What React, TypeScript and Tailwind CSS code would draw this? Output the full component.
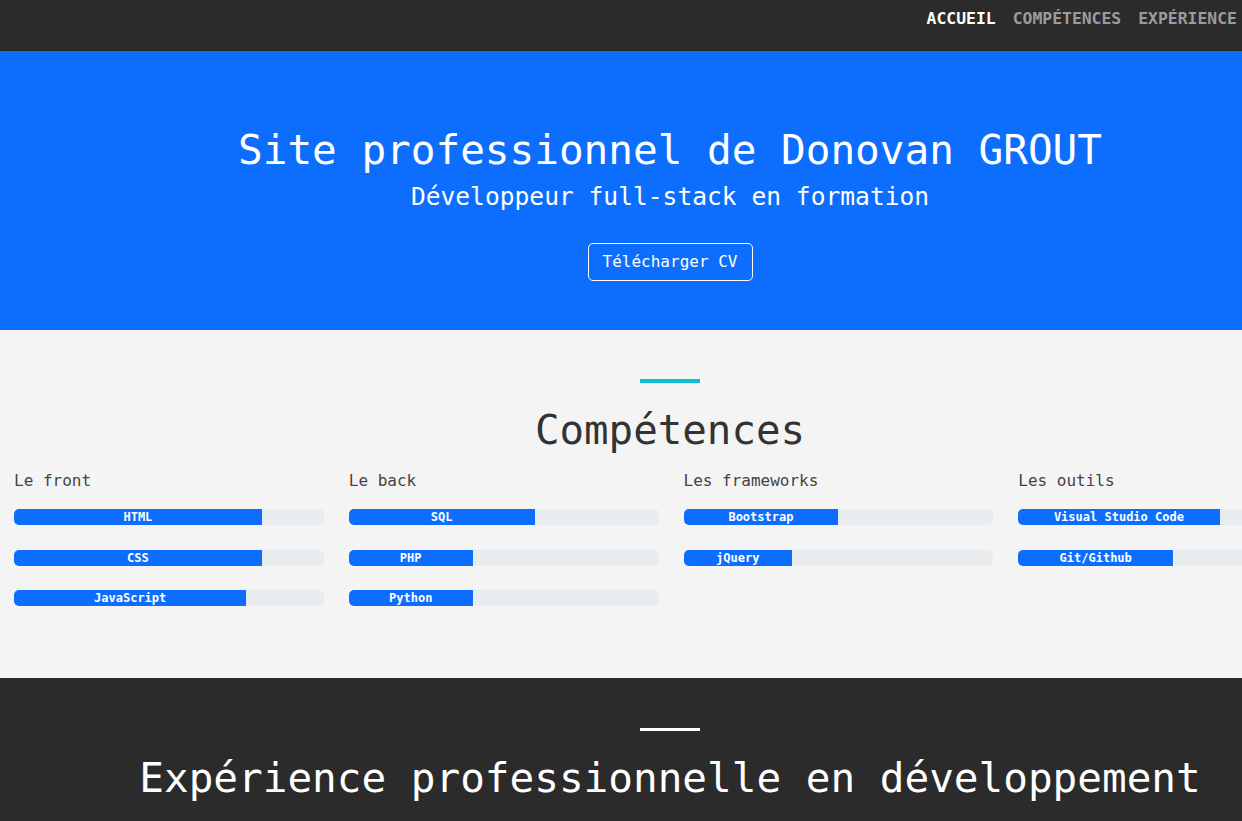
import React from "react";

const mono = { fontFamily: '"DejaVu Sans Mono", "Liberation Mono", monospace' };

type Skill = { name: string; pct: number };
const columns: { title: string; skills: Skill[] }[] = [
  { title: "Le front", skills: [{ name: "HTML", pct: 80 }, { name: "CSS", pct: 80 }, { name: "JavaScript", pct: 75 }] },
  { title: "Le back", skills: [{ name: "SQL", pct: 60 }, { name: "PHP", pct: 40 }, { name: "Python", pct: 40 }] },
  { title: "Les frameworks", skills: [{ name: "Bootstrap", pct: 50 }, { name: "jQuery", pct: 35 }] },
  { title: "Les outils", skills: [{ name: "Visual Studio Code", pct: 65 }, { name: "Git/Github", pct: 50 }] },
];

export default function App() {
  return (
    <div className="w-full h-[821px] overflow-hidden" style={mono}>
      <div className="w-[1340px]">
        <nav className="h-[51px] bg-[#2b2b2b] flex justify-end items-start pt-[10px] pr-[17px] gap-[17px] text-[16.4px] leading-[18px] font-bold uppercase">
          <a className="text-white">Accueil</a>
          <a className="text-[#9b9b9b]">Compétences</a>
          <a className="text-[#9b9b9b]">Expérience</a>
          <a className="text-[#9b9b9b]">Contact</a>
        </nav>

        <header className="bg-[#0d6efd] h-[279px] pt-[75px] flex flex-col items-center text-white">
          <h1 className="text-[41px] leading-[48px] font-normal">Site professionnel de Donovan GROUT</h1>
          <h2 className="text-[24.6px] leading-[30px] mt-[8px]">Développeur full-stack en formation</h2>
          <button className="mt-[31px] h-[38px] w-[165px] border border-white rounded-[5px] text-[16px] leading-[20px] text-white">
            Télécharger CV
          </button>
        </header>

        <section className="bg-[#f4f4f4] h-[348px] pt-[49px] flex flex-col items-center">
          <div className="w-[60px] h-[4px] bg-[#0cbcd4]" />
          <h2 className="mt-[23px] text-[40.8px] leading-[48px] text-[#333333]">Compétences</h2>
          <div className="mt-[15px] w-full grid grid-cols-4 gap-x-[25px] pl-[14px] pr-[12px]">
            {columns.map((col) => (
              <div key={col.title}>
                <h3 className="text-[16px] leading-[24px] text-[#444444]">{col.title}</h3>
                <div className="mt-[16px] flex flex-col gap-[24.5px]">
                  {col.skills.map((s) => (
                    <div key={s.name} className="h-[16px] bg-[#e9ecef] rounded-[5px] overflow-hidden flex">
                      <div
                        className="h-full bg-[#0d6efd] text-white text-[12px] leading-[16px] font-bold text-center whitespace-nowrap"
                        style={{ width: `${s.pct}%` }}
                      >
                        {s.name}
                      </div>
                    </div>
                  ))}
                </div>
              </div>
            ))}
          </div>
        </section>

        <section className="bg-[#2b2b2b] h-[400px] pt-[50px] flex flex-col items-center">
          <div className="w-[60px] h-[3px] bg-white" />
          <h2 className="mt-[23px] text-[41px] leading-[48px] text-white">Expérience professionnelle en développement</h2>
        </section>
      </div>
    </div>
  );
}
